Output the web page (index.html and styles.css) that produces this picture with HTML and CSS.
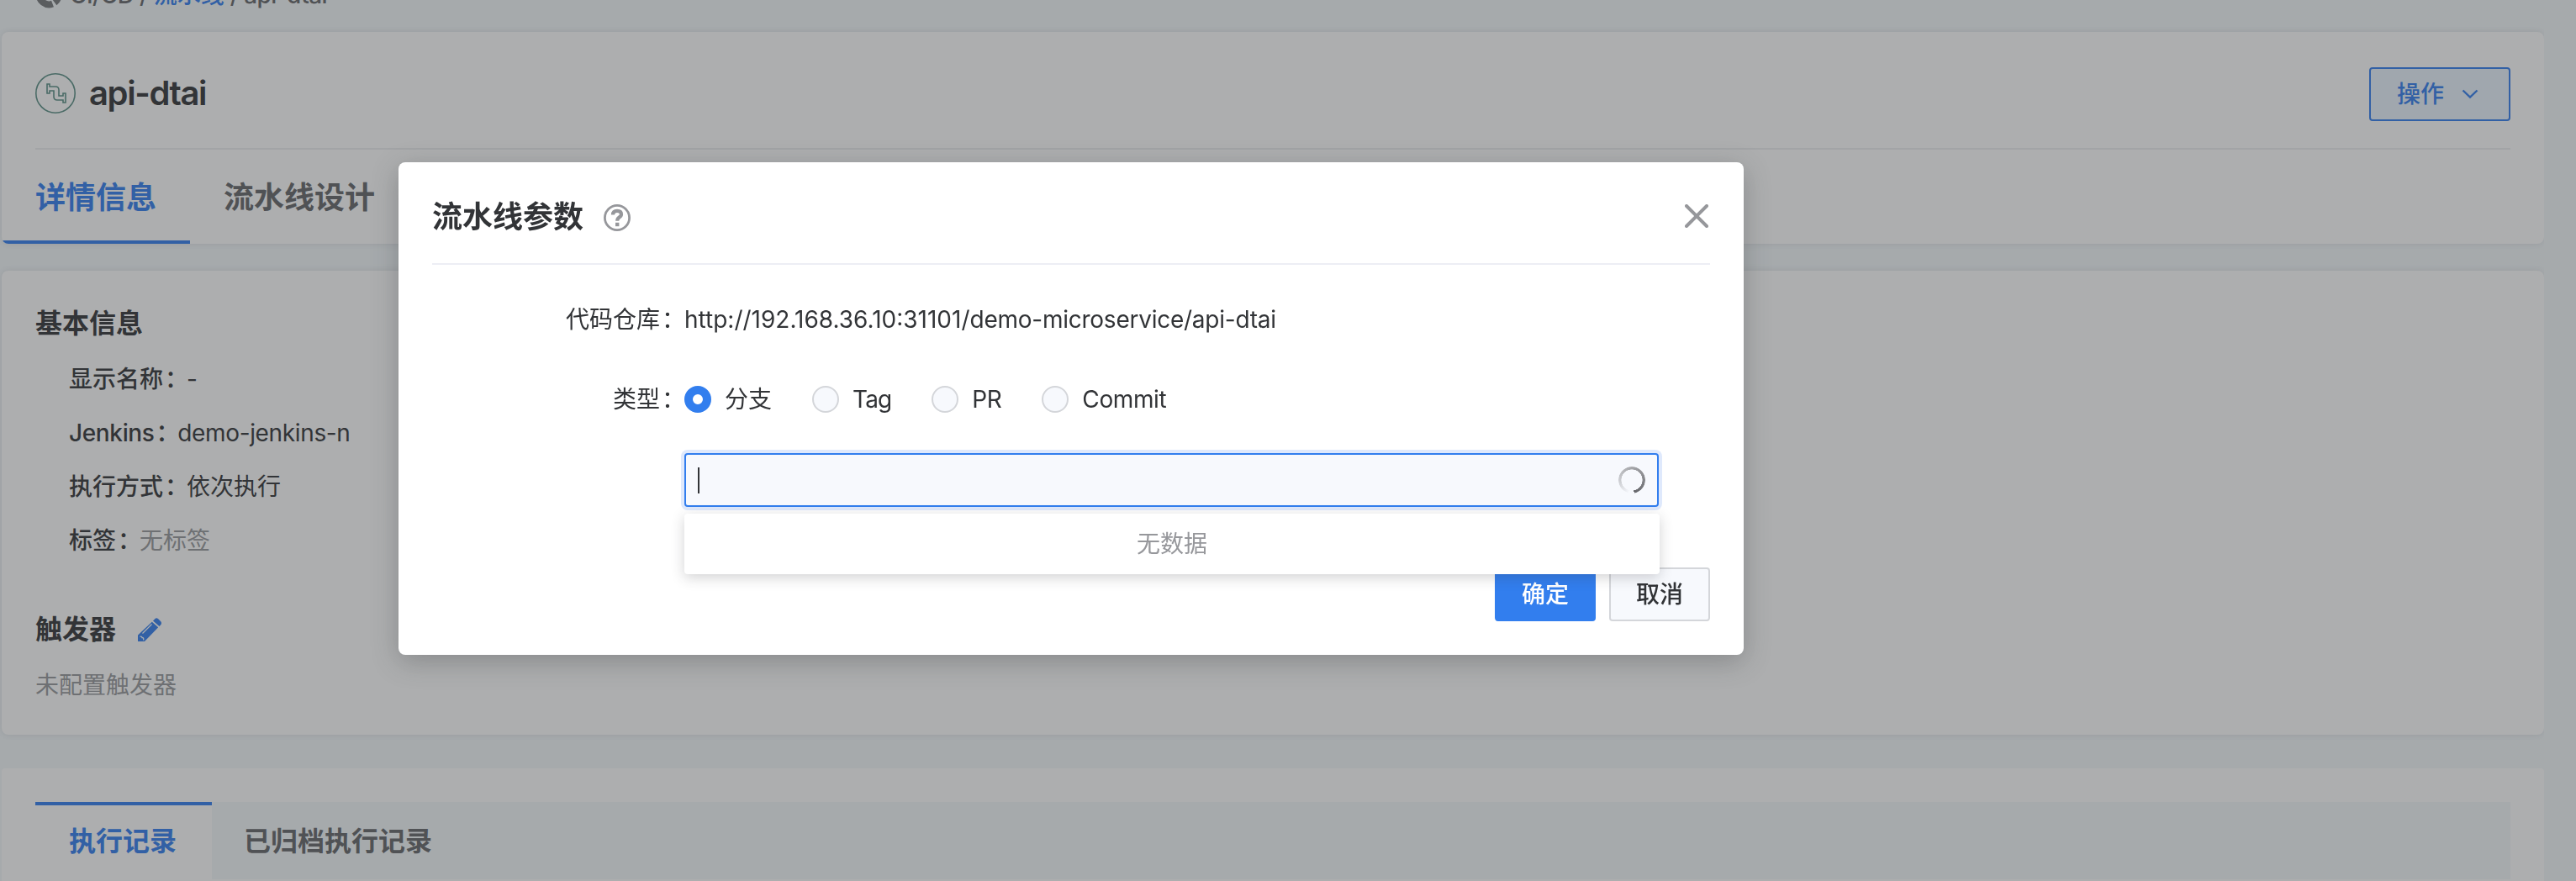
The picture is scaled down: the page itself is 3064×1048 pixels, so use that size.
FILE: index.html
```html
<!DOCTYPE html>
<html lang="zh-CN">
<head>
<meta charset="utf-8">
<title>api-dtai</title>
<link rel="stylesheet" href="styles.css">
</head>
<body>
<main class="page">
  <nav class="breadcrumb">
    <svg class="crumb-icon" viewBox="0 0 32 32"><path d="M23 6.500A11.500 11.500 0 1 0 20.500 26.600M25 8.500A11.500 11.500 0 0 1 23 25" fill="none" stroke="#76787b" stroke-width="8"/></svg>
    <span class="crumb-text">CI/CD / <a>流水线</a> / api-dtai</span>
  </nav>

  <section class="card header-card">
    <div class="title-row">
      <svg class="pipe-icon" viewBox="0 0 48 48" fill="none"><circle cx="24" cy="24" r="23.200" stroke="#5b8f86" stroke-width="1.600"/><path d="M14 13h3v3h7q4 0 4 4v7h5v-3h3v11h-3v-3h-7q-4 0-4-4v-7h-5v3h-3z" stroke="#5b8f86" stroke-width="1.600"/></svg>
      <h1 class="name">api-dtai</h1>
      <button class="action">操作<svg viewBox="0 0 20 12" class="chevron"><path d="M1.500 1.500L10 9.500l8.500-8" fill="none" stroke="#327eee" stroke-width="2.400"/></svg></button>
    </div>
    <div class="tabs">
      <span class="tab tab-active">详情信息</span>
      <span class="tab">流水线设计</span>
    </div>
  </section>

  <section class="card info-card">
    <h2 class="heading">基本信息</h2>
    <dl class="fields">
      <div class="field"><dt>显示名称<span class="colon">：</span></dt><dd>-</dd></div>
      <div class="field latin"><dt>Jenkins<span class="colon">：</span></dt><dd>demo-jenkins-n</dd></div>
      <div class="field"><dt>执行方式<span class="colon">：</span></dt><dd>依次执行</dd></div>
      <div class="field"><dt>标签<span class="colon">：</span></dt><dd class="muted">无标签</dd></div>
    </dl>
    <h2 class="heading trigger">触发器<svg class="pencil" viewBox="0 0 28 28"><path d="M19.500 2Q21.500-1 24 1L27 4Q29 6 27 8.500L25.500 10L18 3.500zM16.800 4.700L24.200 11.300L8 28H0V20.500z" fill="#327eee"/><path d="M5.500 18.500L16.500 7.500M2.500 22.500q2-1 2.500 1q2.500 0 1.500 3" fill="none" stroke="#fff" stroke-width="1.300"/></svg></h2>
    <p class="muted empty">未配置触发器</p>
  </section>

  <section class="card record-card">
    <div class="record-tabs">
      <span class="record-tab record-active">执行记录</span>
      <span class="record-tab">已归档执行记录</span>
    </div>
  </section>
</main>

<div class="mask">
  <div class="dialog">
    <header class="dialog-head">
      <h2 class="dialog-title">流水线参数</h2>
      <svg class="help" viewBox="0 0 32 32" fill="none" stroke="#96979b"><circle cx="16" cy="16" r="14.600" stroke-width="2.800"/><path d="M11 12.600Q11 7.900 16 7.900T21 12Q21 14 18.400 15.600Q16.200 17 16.200 19.800" stroke-width="4.200"/><path d="M14 21.800h4.400v4.400h-4.400z" fill="#96979b" stroke="none"/></svg>
      <svg class="close" viewBox="0 0 28 28"><path d="M2 2l24 24M26 2L2 26" stroke="#96979b" stroke-width="4" stroke-linecap="round"/></svg>
    </header>
    <div class="form">
      <div class="row"><span class="label">代码仓库<span class="colon">：</span></span><span class="url">http://192.168.36.10:31101/<span class="repo">demo-microservice/api-dtai</span></span></div>
      <div class="row"><span class="label">类型<span class="colon">：</span></span>
        <div class="radios">
          <span class="radio"><i class="dot dot-on"></i>分支</span>
          <span class="radio"><i class="dot"></i><b class="t-tag">Tag</b></span>
          <span class="radio"><i class="dot"></i><b>PR</b></span>
          <span class="radio"><i class="dot"></i><b>Commit</b></span>
        </div>
      </div>
      <div class="select">
        <i class="caret"></i><i class="spinner"></i>
        <div class="dropdown">无数据</div>
      </div>
    </div>
    <footer class="dialog-foot">
      <button class="btn primary">确定</button>
      <button class="btn">取消</button>
    </footer>
  </div>
</div>
</body>
</html>
```

FILE: styles.css
```css
* { box-sizing: border-box; }
html, body { margin: 0; height: 1048px; overflow: hidden; }
body {
  background: #f4f9fb;
  color: #323437;
  font: 28px/40px Inter, "Noto Sans CJK SC", sans-serif;
}
h1, h2, dl, dd, p { margin: 0; font-weight: 600; }
button { font: inherit; margin: 0; padding: 0; }
i { font-style: normal; }
svg { display: block; flex: none; }

.page { width: 3026px; height: 1048px; padding-left: 2px; overflow: hidden; }
.breadcrumb { display: flex; align-items: center; height: 38px; padding-left: 40px; }
.crumb-icon { width: 32px; height: 32px; margin-top: -50px; }
.crumb-text { margin: -50px 0 0 9px; white-space: nowrap; color: #646669; letter-spacing: -.6px; font-weight: 500; }
.breadcrumb a { color: #327eee; font-weight: 500; letter-spacing: 0; }

.card { background: #fff; border-radius: 8px; box-shadow: 0 0 8px rgba(50, 40, 60, .12); }
.header-card { height: 252px; overflow: hidden; }
.title-row { display: flex; align-items: center; height: 140px; margin: 0 40px; padding: 8px 0 0; border-bottom: 2px solid #edeef0; }
.pipe-icon { width: 48px; height: 48px; }
.name { margin: 0 0 0 16px; font-size: 40px; line-height: 56px; letter-spacing: -1.400px; }
.action { display: flex; align-items: center; width: 168px; height: 64px; margin: 2px 0 0 auto; padding-left: 31px; border: 2px solid #327eee; border-radius: 4px; background: #eaf3fd; color: #327eee; font-weight: 500; }
.chevron { width: 20px; height: 12px; margin-left: 21px; }
.tabs { display: flex; height: 112px; }
.tab { width: 224px; padding: 37px 0 0 40px; font-size: 36px; line-height: 40px; font-weight: 600; color: #646669; white-space: nowrap; }
.tab-active { color: #327eee; border-bottom: 4px solid #327eee; }

.info-card { height: 552px; margin-top: 32px; padding: 43px 40px 0; }
.heading { font-size: 32px; line-height: 40px; }
.fields { padding: 14px 0 0 40px; }
.field { display: flex; height: 64px; line-height: 64px; white-space: nowrap; }
.field dt { font-weight: 500; }
.field dd { font-weight: 400; }
.latin { letter-spacing: -.350px; }
.colon { margin: 0 -2px 0 2px; }
.muted, .field .muted { color: #96989b; font-weight: 400; }
.trigger { display: flex; align-items: center; margin-top: 54px; }
.pencil { width: 28px; height: 28px; margin-left: 26px; }
.empty { margin-top: 26px; }

.record-card { height: 140px; margin-top: 40px; padding: 40px 40px 0; border-radius: 4px 4px 0 0; box-shadow: none; }
.record-tabs { display: flex; height: 92px; background: #f4f9fb; }
.record-tab { padding: 27px 40px 0; font-size: 32px; font-weight: 600; color: #646669; }
.record-active { width: 210px; margin-right: -2px; padding-top: 23px; border-top: 4px solid #327eee; background: #fff; color: #327eee; }

.mask { position: fixed; inset: 0; background: rgba(50, 52, 55, .4); }
.dialog { display: flex; flex-direction: column; width: 1600px; height: 586px; margin: 193px 0 0 474px; padding: 0 40px; background: #fff; border-radius: 8px; box-shadow: 0 8px 32px rgba(50, 52, 55, .3); }
.dialog-head { display: flex; align-items: center; height: 122px; padding-top: 6px; border-bottom: 2px solid #edeef4; }
.dialog-title { margin-top: 3px; font-size: 36px; line-height: 50px; }
.help { width: 32px; height: 32px; margin: 6px 0 0 24px; }
.close { width: 28px; height: 28px; margin: 2px 2px 0 auto; }
.form { display: flex; flex-direction: column; height: 360px; padding-top: 45px; }
.row { display: flex; height: 40px; margin-bottom: 55px; white-space: nowrap; }
.label { width: 299px; margin-right: 1px; text-align: right; }
.repo { letter-spacing: -.250px; }
.radios { display: flex; gap: 48px; }
.radio { display: flex; align-items: center; gap: 16px; }
.radio b { font-weight: 400; letter-spacing: -.400px; }
.radio .t-tag { letter-spacing: -.900px; }
.dot { width: 32px; height: 32px; border: 2px solid #d4d6da; border-radius: 50%; background: #f7f9fd; }
.dot-on { border: 10px solid #327eee; background: #fff; }
.select { position: relative; display: flex; align-items: center; justify-content: space-between; width: 1159px; height: 64px; margin: -11px 0 0 300px; padding: 0 14px; border: 2px solid #327eee; border-radius: 4px; background: #f7f9fd; box-shadow: 0 0 0 4px #dfe9fc; flex: none; }
.caret { width: 2px; height: 31px; background: #323437; }
.spinner { width: 32px; height: 32px; border-radius: 50%; background: conic-gradient(from 170deg, rgba(120,121,125,0) 0, rgba(120,121,125,0) 6%, rgba(120,121,125,.3) 24%, #a9aaad 50%, #66676b 100%); -webkit-mask: radial-gradient(circle, transparent 12.300px, #000 12.800px); mask: radial-gradient(circle, transparent 12.300px, #000 12.800px); }
.dropdown { position: absolute; z-index: 2; left: -2px; top: 70px; width: 1160px; height: 72px; border-radius: 4px; background: #fff; color: #96979b; line-height: 72px; text-align: center; box-shadow: 0 4px 16px rgba(50, 52, 55, .22); }
.dialog-foot { display: flex; justify-content: flex-end; gap: 16px; }
.btn { width: 120px; height: 64px; border: 2px solid #d4d6da; border-radius: 4px; background: #f7f9fd; color: #323437; font-weight: 500; }
.primary { border-color: #327eee; background: #327eee; color: #fff; }
```
